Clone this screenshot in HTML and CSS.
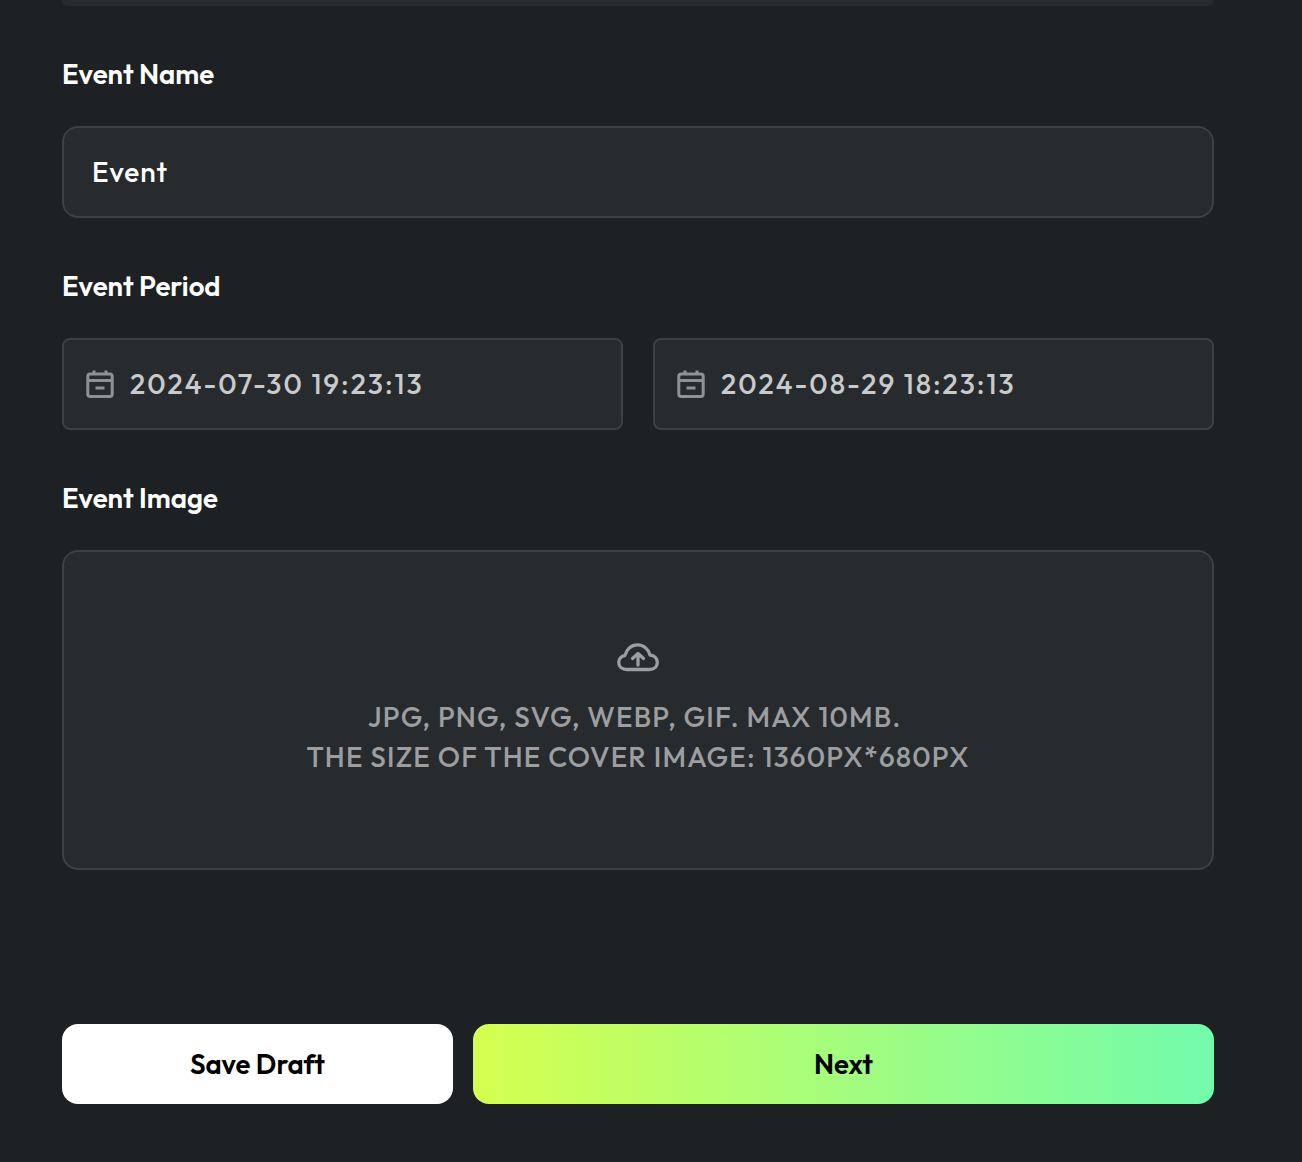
FILE: index.html
```html
<!DOCTYPE html>
<html lang="en">
<head>
    <meta charset="utf-8">
    <link rel="stylesheet" href="styles.css">
    <title>Create Event</title>
</head>
<body>
<div class="form">
    <div class="prev-field"></div>

    <h3 class="field-label">Event Name</h3>
    <div class="text-input">Event</div>

    <h3 class="field-label">Event Period</h3>
    <div class="period-row">
        <div class="date-input">
            <svg class="date-icon" viewBox="0 0 28 28" fill="none" stroke="currentColor" stroke-width="3">
                <rect x="1.800" y="4" width="24.400" height="22.500" rx="2.500"/>
                <path d="M2 10.500H26M8 .5V5M20 .5V5M9.500 18H18.500"/>
            </svg>
            <span>2024-07-30 19:23:13</span>
        </div>
        <div class="date-input">
            <svg class="date-icon" viewBox="0 0 28 28" fill="none" stroke="currentColor" stroke-width="3">
                <rect x="1.800" y="4" width="24.400" height="22.500" rx="2.500"/>
                <path d="M2 10.500H26M8 .5V5M20 .5V5M9.500 18H18.500"/>
            </svg>
            <span>2024-08-29 18:23:13</span>
        </div>
    </div>

    <h3 class="field-label">Event Image</h3>
    <div class="upload-box">
        <svg class="upload-icon" viewBox="0 0 42 30" fill="none" stroke="currentColor" stroke-width="3.300" stroke-linecap="round" stroke-linejoin="round">
            <path d="M10 26.500C5 26.500 1.700 23.500 1.700 19.500C1.700 15.800 4.300 13 8 12.500C9.500 6 14.500 1.800 20.500 1.800C26.500 1.800 31.500 6 33 12C37.500 12.500 40.300 15.500 40.300 19.500C40.300 23.500 37.500 26.500 32 26.500Z"/>
            <path d="M21 22V11M15.500 15.500L21 10.500L26.500 15.500"/>
        </svg>
        <p class="upload-text">JPG, PNG, SVG, WEBP, GIF. MAX 10MB.&nbsp;<br>THE SIZE OF THE COVER IMAGE: 1360PX*680PX</p>
    </div>

    <div class="button-row">
        <button class="draft-button">Save Draft</button>
        <button class="next-button">Next</button>
    </div>
</div>
</body>
</html>
```

FILE: styles.css
```css
* {
  box-sizing: border-box;
}

body {
  margin: 0;
  height: 1162px;
  overflow: hidden;
  background-color: #1d2124;
  font-family: "Outfit", "Lato", "Noto Sans", sans-serif;
  color: #ffffff;
}

.form {
  width: 1152px;
  margin-left: 62px;
}

.prev-field {
  height: 6px;
  background-color: #272b2e;
  border-radius: 0 0 16px 16px;
}

.field-label {
  margin: 0;
  height: 28px;
  font-size: 27.600px;
  line-height: 28px;
  font-weight: 600;
}

.prev-field + .field-label {
  margin-top: 54px;
}

.text-input {
  height: 92px;
  margin: 38px 0 54px;
  padding: 0 28px 2px;
  display: flex;
  align-items: center;
  background-color: #272b2e;
  border: 2px solid #3c4144;
  border-radius: 16px;
  font-size: 28px;
  font-weight: 500;
  letter-spacing: 1px;
}

.period-row {
  display: flex;
  gap: 30px;
  margin: 38px 0 54px;
}

.date-input {
  flex: 1;
  height: 92px;
  padding: 0 22px;
  display: flex;
  align-items: center;
  gap: 16px;
  background-color: #272b2e;
  border: 2px solid #3c4144;
  border-radius: 8px;
  color: #c8cacb;
  font-size: 28px;
  font-weight: 500;
  letter-spacing: 2px;
}

.date-input span {
  padding-bottom: 2px;
}

.date-icon {
  width: 28px;
  height: 28px;
  color: #8f9294;
}

.upload-box {
  height: 320px;
  margin-top: 38px;
  display: flex;
  flex-direction: column;
  align-items: center;
  justify-content: center;
  gap: 24px;
  background-color: #272b2e;
  border: 2px solid #3c4144;
  border-radius: 16px;
  color: #9c9ea0;
}

.upload-icon {
  width: 42px;
  height: 30px;
}

.upload-text {
  margin: 0;
  font-size: 28px;
  font-weight: 500;
  line-height: 40px;
  letter-spacing: 1.150px;
  text-align: center;
}

.button-row {
  display: flex;
  gap: 20px;
  margin-top: 154px;
}

.draft-button,
.next-button {
  height: 80px;
  padding-bottom: 3px;
  border: none;
  border-radius: 16px;
  color: #000000;
  font-family: inherit;
  font-size: 27.500px;
  font-weight: 600;
}

.draft-button {
  width: 391px;
  background-color: #ffffff;
}

.next-button {
  flex: 1;
  background: linear-gradient(90deg, #d5ff4f, #72fbac);
}
```
